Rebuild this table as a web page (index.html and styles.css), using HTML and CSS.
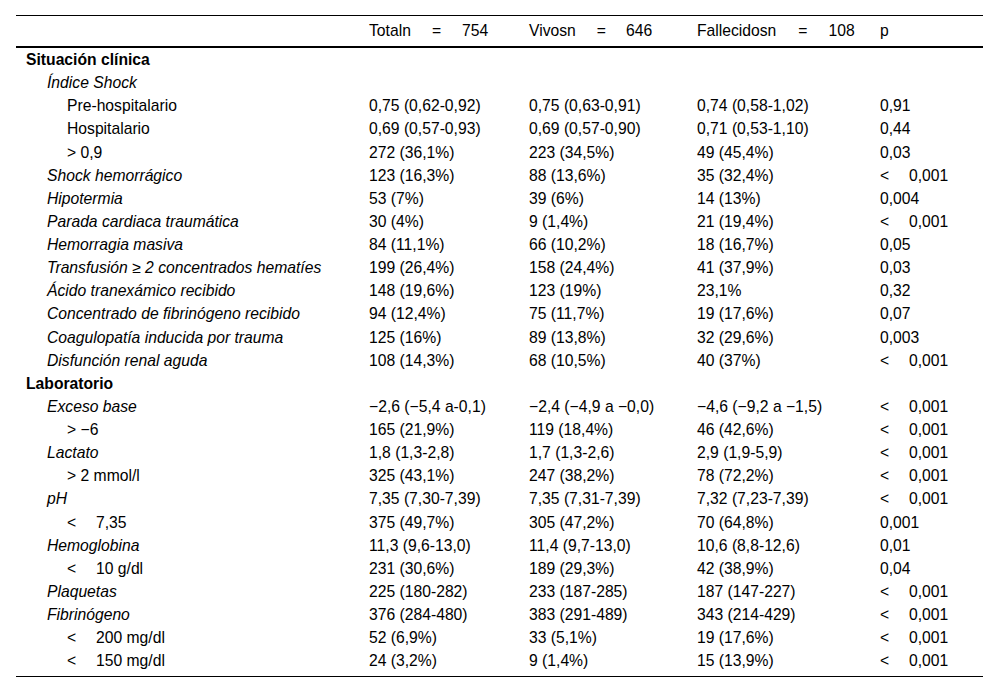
FILE: index.html
```html
<!DOCTYPE html>
<html lang="es">
<head>
<meta charset="utf-8">
<title>Tabla</title>
<link rel="stylesheet" href="styles.css">
</head>
<body>
<table class="data">
  <colgroup>
    <col class="c1"><col class="c2"><col class="c3"><col class="c4"><col class="c5">
  </colgroup>
  <thead>
    <tr>
      <th></th>
      <th>Totaln<span class="eq eq-t">=</span>754</th>
      <th>Vivosn<span class="eq eq-v">=</span>646</th>
      <th>Fallecidosn<span class="eq eq-f">=</span>108</th>
      <th>p</th>
    </tr>
  </thead>
  <tbody>
    <tr><td class="l1">Situación clínica</td><td></td><td></td><td></td><td></td></tr>
    <tr><td class="l2">Índice Shock</td><td></td><td></td><td></td><td></td></tr>
    <tr><td class="l3">Pre-hospitalario</td><td>0,75 (0,62-0,92)</td><td>0,75 (0,63-0,91)</td><td>0,74 (0,58-1,02)</td><td>0,91</td></tr>
    <tr><td class="l3">Hospitalario</td><td>0,69 (0,57-0,93)</td><td>0,69 (0,57-0,90)</td><td>0,71 (0,53-1,10)</td><td>0,44</td></tr>
    <tr><td class="l3">&gt; 0,9</td><td>272 (36,1%)</td><td>223 (34,5%)</td><td>49 (45,4%)</td><td>0,03</td></tr>
    <tr><td class="l2">Shock hemorrágico</td><td>123 (16,3%)</td><td>88 (13,6%)</td><td>35 (32,4%)</td><td><span class="lt">&lt;</span>0,001</td></tr>
    <tr><td class="l2">Hipotermia</td><td>53 (7%)</td><td>39 (6%)</td><td>14 (13%)</td><td>0,004</td></tr>
    <tr><td class="l2">Parada cardiaca traumática</td><td>30 (4%)</td><td>9 (1,4%)</td><td>21 (19,4%)</td><td><span class="lt">&lt;</span>0,001</td></tr>
    <tr><td class="l2">Hemorragia masiva</td><td>84 (11,1%)</td><td>66 (10,2%)</td><td>18 (16,7%)</td><td>0,05</td></tr>
    <tr><td class="l2">Transfusión ≥ 2 concentrados hematíes</td><td>199 (26,4%)</td><td>158 (24,4%)</td><td>41 (37,9%)</td><td>0,03</td></tr>
    <tr><td class="l2">Ácido tranexámico recibido</td><td>148 (19,6%)</td><td>123 (19%)</td><td>23,1%</td><td>0,32</td></tr>
    <tr><td class="l2">Concentrado de fibrinógeno recibido</td><td>94 (12,4%)</td><td>75 (11,7%)</td><td>19 (17,6%)</td><td>0,07</td></tr>
    <tr><td class="l2">Coagulopatía inducida por trauma</td><td>125 (16%)</td><td>89 (13,8%)</td><td>32 (29,6%)</td><td>0,003</td></tr>
    <tr><td class="l2">Disfunción renal aguda</td><td>108 (14,3%)</td><td>68 (10,5%)</td><td>40 (37%)</td><td><span class="lt">&lt;</span>0,001</td></tr>
    <tr><td class="l1">Laboratorio</td><td></td><td></td><td></td><td></td></tr>
    <tr><td class="l2">Exceso base</td><td>−2,6 (−5,4 a-0,1)</td><td>−2,4 (−4,9 a −0,0)</td><td>−4,6 (−9,2 a −1,5)</td><td><span class="lt">&lt;</span>0,001</td></tr>
    <tr><td class="l3">&gt; −6</td><td>165 (21,9%)</td><td>119 (18,4%)</td><td>46 (42,6%)</td><td><span class="lt">&lt;</span>0,001</td></tr>
    <tr><td class="l2">Lactato</td><td>1,8 (1,3-2,8)</td><td>1,7 (1,3-2,6)</td><td>2,9 (1,9-5,9)</td><td><span class="lt">&lt;</span>0,001</td></tr>
    <tr><td class="l3">&gt; 2 mmol/l</td><td>325 (43,1%)</td><td>247 (38,2%)</td><td>78 (72,2%)</td><td><span class="lt">&lt;</span>0,001</td></tr>
    <tr><td class="l2">pH</td><td>7,35 (7,30-7,39)</td><td>7,35 (7,31-7,39)</td><td>7,32 (7,23-7,39)</td><td><span class="lt">&lt;</span>0,001</td></tr>
    <tr><td class="l3"><span class="lt">&lt;</span>7,35</td><td>375 (49,7%)</td><td>305 (47,2%)</td><td>70 (64,8%)</td><td>0,001</td></tr>
    <tr><td class="l2">Hemoglobina</td><td>11,3 (9,6-13,0)</td><td>11,4 (9,7-13,0)</td><td>10,6 (8,8-12,6)</td><td>0,01</td></tr>
    <tr><td class="l3"><span class="lt">&lt;</span>10 g/dl</td><td>231 (30,6%)</td><td>189 (29,3%)</td><td>42 (38,9%)</td><td>0,04</td></tr>
    <tr><td class="l2">Plaquetas</td><td>225 (180-282)</td><td>233 (187-285)</td><td>187 (147-227)</td><td><span class="lt">&lt;</span>0,001</td></tr>
    <tr><td class="l2">Fibrinógeno</td><td>376 (284-480)</td><td>383 (291-489)</td><td>343 (214-429)</td><td><span class="lt">&lt;</span>0,001</td></tr>
    <tr><td class="l3"><span class="lt">&lt;</span>200 mg/dl</td><td>52 (6,9%)</td><td>33 (5,1%)</td><td>19 (17,6%)</td><td><span class="lt">&lt;</span>0,001</td></tr>
    <tr class="last"><td class="l3"><span class="lt">&lt;</span>150 mg/dl</td><td>24 (3,2%)</td><td>9 (1,4%)</td><td>15 (13,9%)</td><td><span class="lt">&lt;</span>0,001</td></tr>
  </tbody>
</table>
</body>
</html>
```

FILE: styles.css
```css
html, body {
  margin: 0;
  padding: 0;
  background: #ffffff;
}

body {
  font-family: "Liberation Sans", Arial, sans-serif;
  font-size: 15.7px;
  color: #000000;
}

.data {
  margin: 15px 0 0 16px;
  width: 967px;
  table-layout: fixed;
  border-collapse: separate;
  border-spacing: 0;
  border-top: 1px solid #000;
  border-bottom: 1px solid #000;
}

.c1 { width: 343px; }
.c2 { width: 160px; }
.c3 { width: 168px; }
.c4 { width: 183px; }
.c5 { width: 113px; }

.data th {
  height: 30px;
  padding: 0 0 0 10px;
  font-weight: normal;
  text-align: left;
  vertical-align: middle;
  border-bottom: 2px solid #000;
  white-space: nowrap;
}

.data td {
  height: 23.12px;
  line-height: 23.12px;
  padding: 0 0 0 10px;
  text-align: left;
  vertical-align: middle;
  white-space: nowrap;
}

.data td.l1 {
  font-weight: bold;
  padding-left: 10px;
}

.data td.l2 {
  font-style: italic;
  padding-left: 31px;
}

.data td.l3 {
  padding-left: 51px;
}

.data tr.last td {
  padding-bottom: 4px;
}

.eq-t { margin: 0 21px 0 21px; }
.eq-v { margin: 0 20px 0 21px; }
.eq-f { margin: 0 21px 0 22px; }

.lt {
  display: inline-block;
  width: 29px;
}
```
